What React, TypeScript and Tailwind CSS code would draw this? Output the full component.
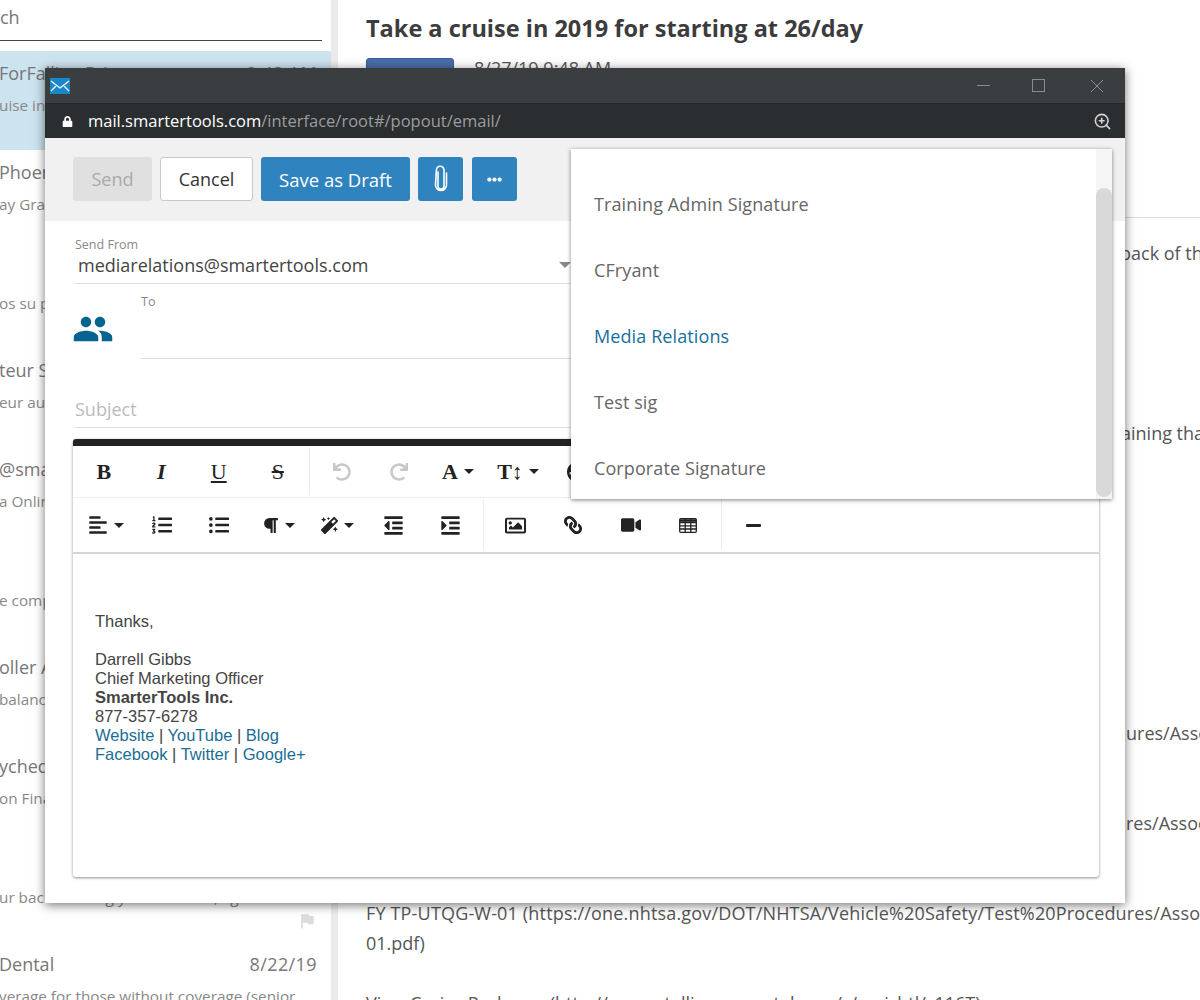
import { FaAlignLeft, FaEllipsisH, FaIndent, FaLink, FaListOl, FaListUl, FaLock, FaMagic, FaMinus, FaOutdent, FaParagraph, FaPalette, FaRedo, FaRegImage, FaUndo, FaVideo } from 'react-icons/fa';
import { MdFlag, MdPeople } from 'react-icons/md';
import { ZoomIn } from 'lucide-react';
import type { ReactNode } from 'react';

const listItems = [
  { title: 'ForFalling Prices', date: '9:48 AM', preview: 'uise in 2019 for starting at 26/day', selected: true },
  { title: 'Phoenix Gift Cards', date: '8/26/19', preview: 'ay Gratitude for a friend or family member' },
  { title: '', date: '', preview: 'os su promotions' },
  { title: 'teur SmarterMail', date: '8/25/19', preview: 'eur automatique de votre message' },
  { title: '@smartertools.com', date: '8/25/19', preview: 'a Online Meeting Invitation' },
  { title: '', date: '', preview: 'e complete your registration today' },
  { title: 'oller Accounts', date: '8/24/19', preview: 'balance is due for your account' },
  { title: 'ychedelic Review', date: '8/23/19', preview: 'on Financial Planning for your family' },
  { title: '', date: '', preview: 'ur back to being your best self, again', flag: true },
  { title: 'Dental', date: '8/22/19', preview: 'verage for those without coverage (senior' },
];

function Caret() {
  return <span className="ml-[6px] inline-block border-x-[5px] border-t-[5px] border-x-transparent border-t-[#222]" />;
}

function Tool({ children, caret, className }: { children: ReactNode; caret?: boolean; className?: string }) {
  return (
    <div className={`flex h-full shrink-0 items-center justify-center text-[#222] ${className ?? 'w-[57.5px]'}`}>
      {children}
      {caret && <Caret />}
    </div>
  );
}

function Glyph({ children }: { children: ReactNode }) {
  return <span className="font-['Liberation_Serif',serif] text-[22px] leading-none">{children}</span>;
}

function Sep() {
  return <div className="my-[2px] w-px shrink-0 self-stretch bg-[#ececec]" />;
}

function Paperclip() {
  return (
    <svg width="16" height="28" viewBox="0 0 16 28" fill="none" stroke="white" strokeWidth="1.6" strokeLinecap="round">
      <path d="M5 7v14a3 3 0 0 0 6 0V5a3.6 3.6 0 0 0-7.600 0L2.500 20a5.500 5.500 0 0 0 11 0V8" />
    </svg>
  );
}

function TableIcon() {
  return (
    <svg width="18" height="15" viewBox="0 0 18 15" fill="none" stroke="#222" strokeWidth="1.300">
      <rect x="0.700" y="0.700" width="16.600" height="13.600" rx="1" />
      <path d="M0.700 4.500h16.600M0.700 7.800h16.600M0.700 11h16.600M6.200 0.700v13.600M11.800 0.700v13.600" />
      <path d="M0.700 2.500h16.600" strokeWidth="2.500" />
    </svg>
  );
}

function EmailList() {
  return (
    <aside className="flex w-[338px] shrink-0 flex-col overflow-hidden border-r-[7px] border-[#ebebeb] font-['Open_Sans',sans-serif]">
      <div className="h-[51px] shrink-0 pr-[9px]">
        <div className="h-[41px] overflow-hidden border-b border-[#444] pt-[4px] text-[18px] text-[#777]">ch</div>
      </div>
      {listItems.map((item, i) => (
        <div key={i} className={`relative h-[99px] shrink-0 overflow-hidden pr-[14px] pt-[9px] ${item.selected ? 'bg-[#cce3f0]' : ''}`}>
          <div className="flex h-[26px] items-center justify-between text-[18px] text-[#777]">
            <span className="-ml-px whitespace-nowrap">{item.title}</span>
            <span className="whitespace-nowrap tracking-[0.4px]">{item.date}</span>
          </div>
          <p className="mt-[7px] -ml-px whitespace-nowrap text-[15.300px] leading-[24px] text-[#888]">{item.preview}</p>
          {item.flag && <MdFlag className="absolute right-[14px] top-[68px] text-[#dcdcdc]" size={20} />}
        </div>
      ))}
    </aside>
  );
}

function EmailView() {
  const body = 'text-[18px] leading-[30px] text-[#555] whitespace-nowrap';
  return (
    <main className="min-w-0 flex-1 overflow-hidden font-['Open_Sans',sans-serif]">
      <div className="h-[218px] border-b border-[#ddd] pl-[28px] pt-[10px]">
        <h1 className="text-[23.500px] font-bold leading-[36px] whitespace-nowrap text-[#3c3c3c]">Take a cruise in 2019 for starting at 26/day</h1>
        <div className="mt-[12px] flex items-start gap-[20px]">
          <div className="h-[40px] w-[88px] rounded-[3px] border border-[#3a5a92] bg-[#4a6eab]" />
          <span className="text-[18px] leading-[20px] text-[#555]">8/27/19 9:48 AM</span>
        </div>
      </div>
      <div className="pl-[28px] pt-[20px]">
        <p className={`${body} pl-[754px]`}>back of the</p>
        <p className={`${body} mt-[150px] pl-[755px]`}>aining tha</p>
        <p className={`${body} mt-[270px] pl-[760px]`}>ures/Associate</p>
        <p className={`${body} mt-[60px] pl-[760px]`}>res/Associate</p>
        <p className={`${body} mt-[60px] tracking-[0.17px]`}>FY TP-UTQG-W-01 (https://one.nhtsa.gov/DOT/NHTSA/Vehicle%20Safety/Test%20Procedures/Associate/</p>
        <p className={body}>01.pdf)</p>
        <p className={`${body} mt-[30px]`}>View Cruise Packages (http://www.etelligenceportal.com/c/cruishtl/c116T)</p>
      </div>
    </main>
  );
}

function EditorToolbar() {
  return (
    <div>
      <div className="flex h-[52px] items-stretch border-b border-[#ececec] pl-[2px]">
        <Tool><Glyph><b>B</b></Glyph></Tool>
        <Tool><Glyph><b><i>I</i></b></Glyph></Tool>
        <Tool><Glyph><span className="underline">U</span></Glyph></Tool>
        <Tool className="mr-[4px] w-[57.500px] pl-[3px]"><Glyph><span className="line-through">S</span></Glyph></Tool>
        <Sep />
        <div className="w-[3px] shrink-0" />
        <Tool className="w-[57.500px] !text-[#c8c8c8]"><FaUndo size={18} /></Tool>
        <Tool className="w-[57.500px] !text-[#c8c8c8]"><FaRedo size={18} /></Tool>
        <Tool caret className="w-[60px]"><Glyph><b>A</b></Glyph></Tool>
        <Tool caret className="w-[60px]"><Glyph><b>T↕</b></Glyph></Tool>
        <Tool className="w-[57.500px]"><FaPalette size={20} /></Tool>
      </div>
      <div className="flex h-[54px] items-stretch">
        <Tool caret className="w-[60px] pl-[5px]"><FaAlignLeft size={20} /></Tool>
        <Tool><FaListOl size={20} /></Tool>
        <Tool><FaListUl size={20} /></Tool>
        <Tool caret className="w-[61px]"><FaParagraph size={17} /></Tool>
        <Tool caret className="w-[56px]"><FaMagic size={17} /></Tool>
        <Tool className="w-[56.500px]"><FaOutdent size={21} /></Tool>
        <Tool className="mr-[4px] w-[57.500px]"><FaIndent size={21} /></Tool>
        <Sep />
        <Tool className="ml-[3px] w-[57.500px]"><FaRegImage size={21} /></Tool>
        <Tool><FaLink size={18} className="-scale-x-100" /></Tool>
        <Tool><FaVideo size={20} /></Tool>
        <Tool className="mr-[4px] w-[57.500px]"><TableIcon /></Tool>
        <Sep />
        <Tool className="w-[62px]"><FaMinus size={17} /></Tool>
      </div>
    </div>
  );
}

function Signature() {
  const link = 'text-[#1a6d94]';
  return (
    <div className="px-[22px] pt-[58px] font-['Liberation_Sans',sans-serif] text-[16.500px] leading-[19px] text-[#444]">
      <p>Thanks,</p>
      <p className="mt-[19px]">Darrell Gibbs</p>
      <p>Chief Marketing Officer</p>
      <p className="font-bold">SmarterTools Inc.</p>
      <p>877-357-6278</p>
      <p><a className={link}>Website</a> | <a className={link}>YouTube</a> | <a className={link}>Blog</a></p>
      <p><a className={link}>Facebook</a> | <a className={link}>Twitter</a> | <a className={link}>Google+</a></p>
    </div>
  );
}

function SignatureMenu() {
  const names = ['Training Admin Signature', 'CFryant', 'Media Relations', 'Test sig', 'Corporate Signature'];
  return (
    <div className="absolute left-[526px] top-[81px] h-[350px] w-[541px] overflow-hidden bg-white shadow-[0_1px_4px_rgba(0,0,0,0.5)]">
      <ul className="pt-[22px]">
        {names.map((name) => (
          <li key={name} className={`flex h-[66px] items-center pl-[23px] text-[18px] tracking-[0.1px] ${name === 'Media Relations' ? 'text-[#16709c]' : 'text-[#666]'}`}>{name}</li>
        ))}
      </ul>
      <div className="absolute right-0 top-0 h-full w-[16px] bg-[#f5f5f5]">
        <div className="absolute inset-x-0 bottom-[2px] top-[39px] rounded-full bg-[#d9d9d9]" />
      </div>
    </div>
  );
}

function ComposeWindow() {
  return (
    <div className="absolute left-[45px] top-[68px] h-[835px] w-[1080px] bg-white font-['Open_Sans',sans-serif] shadow-[0_2px_10px_rgba(0,0,0,0.55)]">
      <div className="flex h-[35px] items-center justify-between bg-[#3b3e41] pl-[5px] pr-[21px]">
        <svg width="20" height="16" viewBox="0 0 20 16">
          <rect width="20" height="16" fill="#1a87c9" />
          <path d="M1 3l9 7 9-7M1 13l5-5M19 13l-5-5" fill="none" stroke="white" strokeWidth="1.200" />
        </svg>
        <div className="flex items-center">
          <div className="h-px w-[13px] bg-[#8a8d90]" />
          <div className="ml-[42px] h-[13px] w-[13px] border border-[#8a8d90]" />
          <svg className="ml-[45px]" width="14" height="14" viewBox="0 0 14 14" stroke="#8a8d90" strokeWidth="1"><path d="M1 1l12 12M13 1L1 13" /></svg>
        </div>
      </div>
      <div className="flex h-[35px] items-center justify-between border-t border-[#26292b] bg-[#2b2e30] pl-[17px] pr-[13px]">
        <div className="flex items-center gap-[15px] text-[16.500px] text-white">
          <FaLock size={11} />
          <span>mail.smartertools.com<span className="text-[#9a9d9f]">/interface/root#/popout/email/</span></span>
        </div>
        <ZoomIn size={19} className="text-[#d5d5d5]" />
      </div>

      <div className="flex h-[83px] items-start gap-[8px] bg-[#f1f1f1] pl-[28px] pt-[19px] text-[18px]">
        <button className="h-[44px] w-[79px] rounded-[3px] bg-[#e0e0e0] pt-px text-[#aaa]">Send</button>
        <button className="h-[44px] w-[93px] rounded-[3px] border border-[#c8c8c8] bg-white pt-px text-[#333]">Cancel</button>
        <button className="h-[44px] w-[149px] rounded-[3px] bg-[#2f84bf] pt-px text-[18.500px] text-white">Save as Draft</button>
        <button className="flex h-[44px] w-[45px] items-center justify-center rounded-[3px] bg-[#2f84bf]"><Paperclip /></button>
        <button className="ml-px flex h-[44px] w-[45px] items-center justify-center rounded-[3px] bg-[#2f84bf] text-white"><FaEllipsisH size={15} /></button>
      </div>

      <div className="ml-[30px] mr-[27px] border-b border-[#ddd] pb-[6px] pt-[16px]">
        <div className="text-[12.500px] leading-[16px] text-[#888]">Send From</div>
        <div className="flex h-[24px] w-[496px] items-center justify-between pl-[3px] text-[18px] text-[#444]">
          <span>mediarelations@smartertools.com</span>
          <span className="inline-block border-x-[6px] border-t-[6px] border-x-transparent border-t-[#888]" />
        </div>
      </div>

      <div className="ml-[27px] flex h-[75px]">
        <div className="flex w-[69px] items-start pt-[24px] text-[#05638f]"><MdPeople size={42} /></div>
        <div className="mr-[27px] flex-1 border-b border-[#ddd] pt-[10px] text-[12.500px] leading-[16px] text-[#888]">To</div>
      </div>

      <div className="ml-[30px] mr-[27px] h-[69px] border-b border-[#ddd] pt-[38px] text-[18px] leading-[24px] text-[#bbb]">Subject</div>

      <div className="ml-[28px] mt-[11px] flex h-[438px] w-[1026px] flex-col overflow-hidden rounded-[3px] bg-white shadow-[0_1px_3px_rgba(0,0,0,0.45)]">
        <div className="h-[7px] shrink-0 bg-[#222]" />
        <EditorToolbar />
        <div className="flex-1 border-t-2 border-[#d5d5d5]"><Signature /></div>
      </div>

      <SignatureMenu />
    </div>
  );
}

export default function App() {
  return (
    <div className="relative flex h-[1000px] w-[1200px] overflow-hidden bg-white">
      <EmailList />
      <EmailView />
      <ComposeWindow />
    </div>
  );
}
